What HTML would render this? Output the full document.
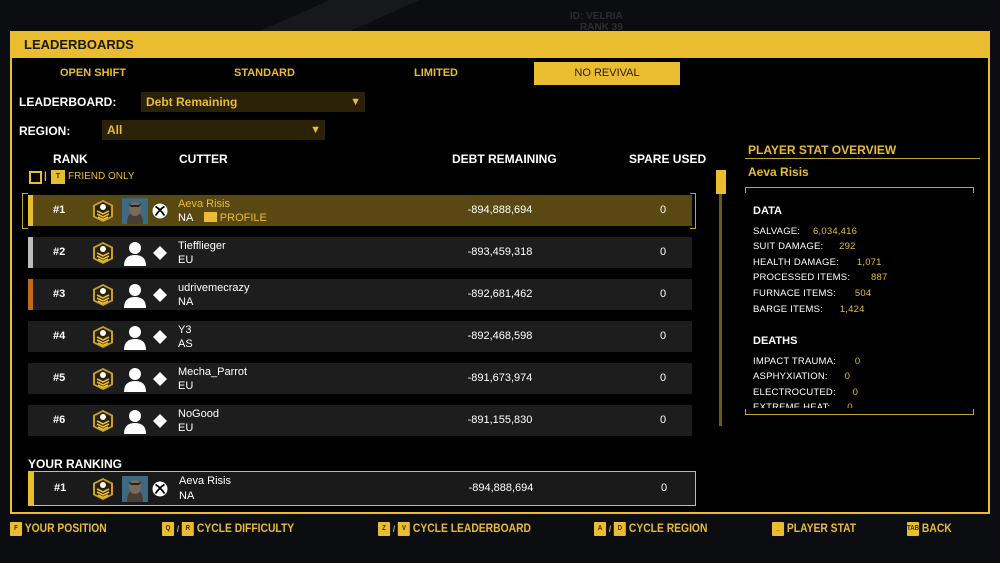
<!DOCTYPE html>
<html><head><meta charset="utf-8"><style>
*{margin:0;padding:0;box-sizing:border-box}
body{width:1000px;height:563px;overflow:hidden;background:#0b0d11;font-family:"Liberation Sans",sans-serif;font-weight:bold;color:#fff;position:relative}
.a{position:absolute;white-space:nowrap}
.y{color:#e9bd2f}
.s{font-size:11px}
.row{position:absolute;left:28px;width:664px;height:31px;background:#1d1d1d}
.bar{position:absolute;left:0;top:0;width:5px;height:100%}
.row .rk{position:absolute;left:25px;top:9px;font-size:11px}
.row .nm{position:absolute;left:150px;top:3px;font-size:11px;font-weight:normal}
.row .rg{position:absolute;left:150px;top:17px;font-size:11px;font-weight:normal}
.row .db{position:absolute;left:420px;width:104px;text-align:center;top:9px;font-size:11px;font-weight:normal}
.row .sp{position:absolute;left:632px;top:9px;font-size:11px;font-weight:normal}
.row svg{position:absolute}
.key{display:inline-block;background:#e9bd2f;color:#3a2c00;font-size:7px;width:14px;height:14px;line-height:14px;text-align:center;vertical-align:middle;border-radius:1px}
.ft{position:absolute;top:521px;font-size:12px;color:#e9bd2f;white-space:nowrap;transform:scaleX(.86);transform-origin:0 0}
.st{font-size:9.5px;font-weight:normal;letter-spacing:.2px}
</style></head><body>
<svg class="a" style="left:0;top:0" width="1000" height="31"><polygon points="260,31 330,0 420,0 350,31" fill="#16181c"/><text x="570" y="19" font-size="10" fill="#2a2d33" font-family="Liberation Sans">ID: VELRIA</text><text x="580" y="30" font-size="10" fill="#2a2d33" font-family="Liberation Sans">RANK 39</text></svg>
<div class="a" style="left:10px;top:31px;width:980px;height:483px;background:#000;border:2px solid #e9bd2f;border-top:none"></div>
<div class="a" style="left:10px;top:31px;width:980px;height:27px;background:#e9bd2f"></div>
<div class="a" style="left:24px;top:37px;font-size:13px;color:#1e1800">LEADERBOARDS</div>
<div class="a y s" style="left:60px;top:67px">OPEN SHIFT</div>
<div class="a y s" style="left:234px;top:67px">STANDARD</div>
<div class="a y s" style="left:414px;top:67px">LIMITED</div>
<div class="a" style="left:534px;top:62px;width:146px;height:23px;background:#e9bd2f;color:#2a2000;font-size:11px;font-weight:normal;text-align:center;line-height:23px">NO REVIVAL</div>
<div class="a" style="left:19px;top:95px;font-size:12px">LEADERBOARD:</div>
<div class="a y" style="left:141px;top:92px;width:224px;height:20px;background:#2a2106;font-size:12px;padding:3px 0 0 5px">Debt Remaining<span style="position:absolute;right:4px;top:4px;font-size:11px">▼</span></div>
<div class="a" style="left:19px;top:124px;font-size:12px">REGION:</div>
<div class="a y" style="left:102px;top:120px;width:223px;height:20px;background:#2a2106;font-size:12px;padding:3px 0 0 5px">All<span style="position:absolute;right:4px;top:4px;font-size:11px">▼</span></div>
<div class="a" style="left:53px;top:152px;font-size:12px">RANK</div>
<div class="a" style="left:179px;top:152px;font-size:12px">CUTTER</div>
<div class="a" style="left:452px;top:152px;font-size:12px">DEBT REMAINING</div>
<div class="a" style="left:629px;top:152px;font-size:12px">SPARE USED</div>
<div class="a" style="left:29px;top:171px;width:13px;height:13px;border:2px solid #e9bd2f"></div>
<div class="a y" style="left:44px;top:171px;font-size:10px">|</div>
<div class="a" style="left:51px;top:170px;width:14px;height:14px;background:#e9bd2f;color:#3a2c00;font-size:7px;text-align:center;line-height:14px">T</div>
<div class="a y" style="left:68px;top:171px;font-size:10px;font-weight:normal">FRIEND ONLY</div>
<svg width="0" height="0" style="position:absolute"><defs>
<g id="bd"><polygon points="10,0 20,5 20,17 10,22 0,17 0,5" fill="#c9a02a"/><polygon points="10,2 18,6 18,16 10,20 2,16 2,6" fill="#2a2208"/><circle cx="10" cy="7" r="3" fill="#fff"/><path d="M4 11 L10 14 L16 11 M4 14 L10 17 L16 14 M5 17 L10 19.5 L15 17" stroke="#e9bd2f" stroke-width="1.6" fill="none"/></g>
<g id="pp"><circle cx="13" cy="8" r="6" fill="#fff"/><path d="M2 26 Q2 15 13 15 Q24 15 24 26Z" fill="#fff"/></g>
<g id="xb"><circle cx="8" cy="8" r="7.5" fill="#fff"/><path d="M3.5 3.5 Q8 6 12.5 12.5 M12.5 3.5 Q8 6 3.5 12.5" stroke="#000" stroke-width="1.8" fill="none"/></g>
<g id="av"><rect width="26" height="26" fill="#3b6a82"/><path d="M5 26 Q5 14 13 14 Q21 14 21 26Z" fill="#4a3d33"/><ellipse cx="13" cy="11" rx="6" ry="7" fill="#7a6a5c"/><path d="M6 5 L9 9 L17 9 L20 5 L17 7 L9 7Z" fill="#222"/></g>
</defs></svg>
<div class="a" style="left:22px;top:193px;width:6px;height:36px;border:1px solid #c9a02a;border-right:none"></div>
<div class="a" style="left:690px;top:193px;width:6px;height:36px;border:1px solid #c9a02a;border-left:none"></div>
<div class="row" style="top:195px;background:#5a4812"><div class="bar" style="background:#e9bd2f"></div><div class="rk">#1</div>
<svg style="left:65px;top:5px" width="20" height="22"><use href="#bd"/></svg><svg style="left:94px;top:3px" width="26" height="26"><use href="#av"/></svg><svg style="left:124px;top:8px" width="16" height="16"><use href="#xb"/></svg>
<div class="nm y">Aeva Risis</div><div class="rg">NA <span style="display:inline-block;background:#e9bd2f;width:13px;height:10px;margin-left:8px;vertical-align:-1px"></span> <span class="y">PROFILE</span></div><div class="db">-894,888,694</div><div class="sp">0</div></div>
<div class="row" style="top:237px"><div class="bar" style="background:#bbb"></div><div class="rk">#2</div><svg style="left:65px;top:5px" width="20" height="22"><use href="#bd"/></svg><svg style="left:94px;top:3px" width="26" height="26"><use href="#pp"/></svg><svg style="left:124px;top:8px" width="16" height="16"><polygon points="8,1 15,8 8,15 1,8" fill="#fff"/></svg><div class="nm">Tiefflieger</div><div class="rg">EU</div><div class="db">-893,459,318</div><div class="sp">0</div></div>
<div class="row" style="top:279px"><div class="bar" style="background:#c46a12"></div><div class="rk">#3</div><svg style="left:65px;top:5px" width="20" height="22"><use href="#bd"/></svg><svg style="left:94px;top:3px" width="26" height="26"><use href="#pp"/></svg><svg style="left:124px;top:8px" width="16" height="16"><polygon points="8,1 15,8 8,15 1,8" fill="#fff"/></svg><div class="nm">udrivemecrazy</div><div class="rg">NA</div><div class="db">-892,681,462</div><div class="sp">0</div></div>
<div class="row" style="top:321px"><div class="rk">#4</div><svg style="left:65px;top:5px" width="20" height="22"><use href="#bd"/></svg><svg style="left:94px;top:3px" width="26" height="26"><use href="#pp"/></svg><svg style="left:124px;top:8px" width="16" height="16"><polygon points="8,1 15,8 8,15 1,8" fill="#fff"/></svg><div class="nm">Y3</div><div class="rg">AS</div><div class="db">-892,468,598</div><div class="sp">0</div></div>
<div class="row" style="top:363px"><div class="rk">#5</div><svg style="left:65px;top:5px" width="20" height="22"><use href="#bd"/></svg><svg style="left:94px;top:3px" width="26" height="26"><use href="#pp"/></svg><svg style="left:124px;top:8px" width="16" height="16"><polygon points="8,1 15,8 8,15 1,8" fill="#fff"/></svg><div class="nm">Mecha_Parrot</div><div class="rg">EU</div><div class="db">-891,673,974</div><div class="sp">0</div></div>
<div class="row" style="top:405px"><div class="rk">#6</div><svg style="left:65px;top:5px" width="20" height="22"><use href="#bd"/></svg><svg style="left:94px;top:3px" width="26" height="26"><use href="#pp"/></svg><svg style="left:124px;top:8px" width="16" height="16"><polygon points="8,1 15,8 8,15 1,8" fill="#fff"/></svg><div class="nm">NoGood</div><div class="rg">EU</div><div class="db">-891,155,830</div><div class="sp">0</div></div>
<div class="a" style="left:719px;top:194px;width:3px;height:232px;background:#6b5a17"></div>
<div class="a" style="left:716px;top:170px;width:10px;height:24px;background:#e9bd2f"></div>
<div class="a" style="left:28px;top:457px;font-size:12px">YOUR RANKING</div>
<div class="row" style="top:471px;width:668px;height:35px;border:1px solid #e9bd2f;background:#1a1a1a"><div class="bar" style="background:#e9bd2f"></div><div class="rk" style="top:10px">#1</div>
<svg style="left:64px;top:6px" width="20" height="22"><use href="#bd"/></svg><svg style="left:93px;top:4px" width="26" height="26"><use href="#av"/></svg><svg style="left:123px;top:9px" width="16" height="16"><use href="#xb"/></svg>
<div class="nm" style="top:3px">Aeva Risis</div><div class="rg" style="top:18px">NA</div><div class="db" style="top:10px">-894,888,694</div><div class="sp" style="top:10px">0</div></div>
<div class="a y" style="left:748px;top:143px;font-size:12px">PLAYER STAT OVERVIEW</div>
<div class="a" style="left:745px;top:158px;width:235px;height:1px;background:#c9a02a"></div>
<div class="a y" style="left:748px;top:165px;font-size:12px">Aeva Risis</div>
<div class="a" style="left:745px;top:187px;width:229px;height:6px;border:1px solid #c9a02a;border-bottom:none"></div>
<div class="a" style="left:745px;top:409px;width:229px;height:6px;border:1px solid #c9a02a;border-top:none"></div>
<div class="a" style="left:753px;top:205px;font-size:11px">DATA</div>
<div class="a st" style="left:753px;top:226px">SALVAGE: <span class="y" style="margin-left:10px">6,034,416</span></div>
<div class="a st" style="left:753px;top:241px">SUIT DAMAGE: <span class="y" style="margin-left:13px">292</span></div>
<div class="a st" style="left:753px;top:257px">HEALTH DAMAGE: <span class="y" style="margin-left:15px">1,071</span></div>
<div class="a st" style="left:753px;top:272px">PROCESSED ITEMS: <span class="y" style="margin-left:18px">887</span></div>
<div class="a st" style="left:753px;top:288px">FURNACE ITEMS: <span class="y" style="margin-left:16px">504</span></div>
<div class="a st" style="left:753px;top:304px">BARGE ITEMS: <span class="y" style="margin-left:14px">1,424</span></div>
<div class="a" style="left:753px;top:335px;font-size:11px">DEATHS</div>
<div class="a st" style="left:753px;top:356px">IMPACT TRAUMA: <span class="y" style="margin-left:16px">0</span></div>
<div class="a st" style="left:753px;top:371px">ASPHYXIATION: <span class="y" style="margin-left:14px">0</span></div>
<div class="a st" style="left:753px;top:387px">ELECTROCUTED: <span class="y" style="margin-left:14px">0</span></div>
<div class="a st" style="left:753px;top:402px;height:6px;overflow:hidden">EXTREME HEAT: <span class="y" style="margin-left:14px">0</span></div>
<div class="ft" style="left:10px"><span class="key">F</span> YOUR POSITION</div>
<div class="ft" style="left:162px"><span class="key">Q</span> <span style="font-size:9px">/</span> <span class="key">R</span> CYCLE DIFFICULTY</div>
<div class="ft" style="left:378px"><span class="key">Z</span> <span style="font-size:9px">/</span> <span class="key">V</span> CYCLE LEADERBOARD</div>
<div class="ft" style="left:594px"><span class="key">A</span> <span style="font-size:9px">/</span> <span class="key">D</span> CYCLE REGION</div>
<div class="ft" style="left:772px"><span class="key">_</span> PLAYER STAT</div>
<div class="ft" style="left:907px"><span class="key">TAB</span> BACK</div>
</body></html>
